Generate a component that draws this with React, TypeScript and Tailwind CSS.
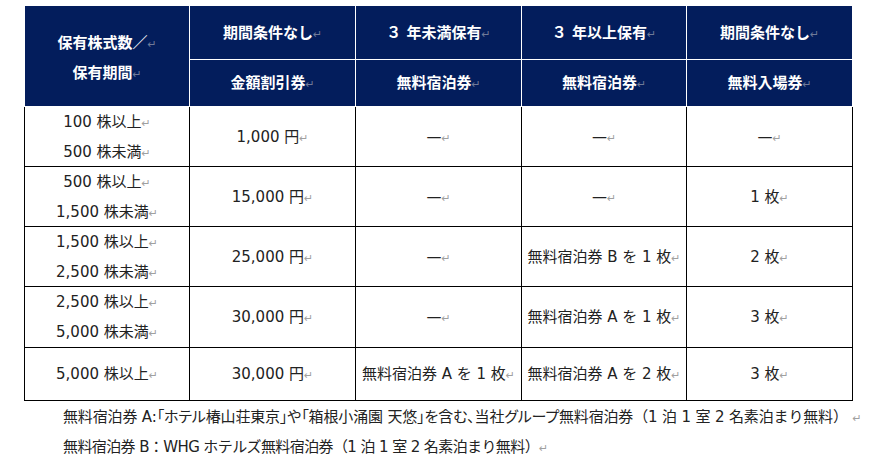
const font = "font-['DejaVu_Sans','Noto_Sans_CJK_JP',sans-serif]"

const rows = [
  { shares: ['100 株以上', '500 株未満'], yen: '1,000 円', a: '—', b: '—', c: '—', h: 'h-[60px]' },
  { shares: ['500 株以上', '1,500 株未満'], yen: '15,000 円', a: '—', b: '—', c: '1 枚', h: 'h-[60px]' },
  { shares: ['1,500 株以上', '2,500 株未満'], yen: '25,000 円', a: '—', b: '無料宿泊券 B を 1 枚', c: '2 枚', h: 'h-[60px]' },
  { shares: ['2,500 株以上', '5,000 株未満'], yen: '30,000 円', a: '—', b: '無料宿泊券 A を 1 枚', c: '3 枚', h: 'h-[61px]' },
  { shares: ['5,000 株以上'], yen: '30,000 円', a: '無料宿泊券 A を 1 枚', b: '無料宿泊券 A を 2 枚', c: '3 枚', h: 'h-[53px]' },
]

function Mark({ dark }: { dark?: boolean }) {
  return <span className={`text-[11px] leading-none font-normal tracking-normal ${dark ? 'text-[#6f7a98]' : 'text-[#a0a0a0]'}`}>↵</span>
}

function Cell({ text }: { text: string }) {
  return (
    <td className="border border-black p-0 text-center align-middle whitespace-nowrap">
      {text}
      <Mark />
    </td>
  )
}

export default function App() {
  const head = 'border border-white p-0 text-center align-middle font-bold text-white whitespace-nowrap'
  return (
    <div className={`w-[880px] h-[465px] bg-white pt-[5px] pl-[24px] text-[15px] leading-[22px] text-[#222] ${font}`}>
      <table className="border-collapse table-fixed w-[828px]">
        <colgroup>
          <col className="w-[165px]" />
          <col className="w-[166px]" />
          <col className="w-[166px]" />
          <col className="w-[165px]" />
          <col className="w-[166px]" />
        </colgroup>
        <thead className="bg-[#031d5c]">
          <tr className="h-[54px]">
            <th rowSpan={2} className={`${head} leading-[30px] pt-[4px]`}>
              保有株式数／<Mark dark />
              <br />
              保有期間<Mark dark />
            </th>
            <th className={head}>期間条件なし<Mark dark /></th>
            <th className={head}>３ 年未満保有<Mark dark /></th>
            <th className={head}>３ 年以上保有<Mark dark /></th>
            <th className={head}>期間条件なし<Mark dark /></th>
          </tr>
          <tr className="h-[47px]">
            <th className={head}>金額割引券<Mark dark /></th>
            <th className={head}>無料宿泊券<Mark dark /></th>
            <th className={head}>無料宿泊券<Mark dark /></th>
            <th className={head}>無料入場券<Mark dark /></th>
          </tr>
        </thead>
        <tbody>
          {rows.map((r) => (
            <tr key={r.shares[0]} className={r.h}>
              <td className="border border-black p-0 text-center align-middle whitespace-nowrap">
                <div className="flex flex-col gap-[8px]">
                  {r.shares.map((s) => (
                    <div key={s}>
                      {s}
                      <Mark />
                    </div>
                  ))}
                </div>
              </td>
              <Cell text={r.yen} />
              <Cell text={r.a} />
              <Cell text={r.b} />
              <Cell text={r.c} />
            </tr>
          ))}
        </tbody>
      </table>
      {/* notes under the table */}
      <div className="pl-[39px] pt-[1px] text-[15px] leading-[30px] text-[#222] whitespace-nowrap">
        <p className="tracking-[-0.15px]">
          <span className="[font-feature-settings:'palt']">無料宿泊券 A:「ホテル椿山荘東京」や「箱根小涌園 天悠」を含む、当社グループ無料宿泊券</span>
          <span>（1 泊 1 室 2 名素泊まり無料） </span>
          <Mark />
        </p>
        <p className="tracking-[-0.6px]">
          無料宿泊券 B：WHG ホテルズ無料宿泊券（1 泊 1 室 2 名素泊まり無料）<Mark />
        </p>
      </div>
    </div>
  )
}
